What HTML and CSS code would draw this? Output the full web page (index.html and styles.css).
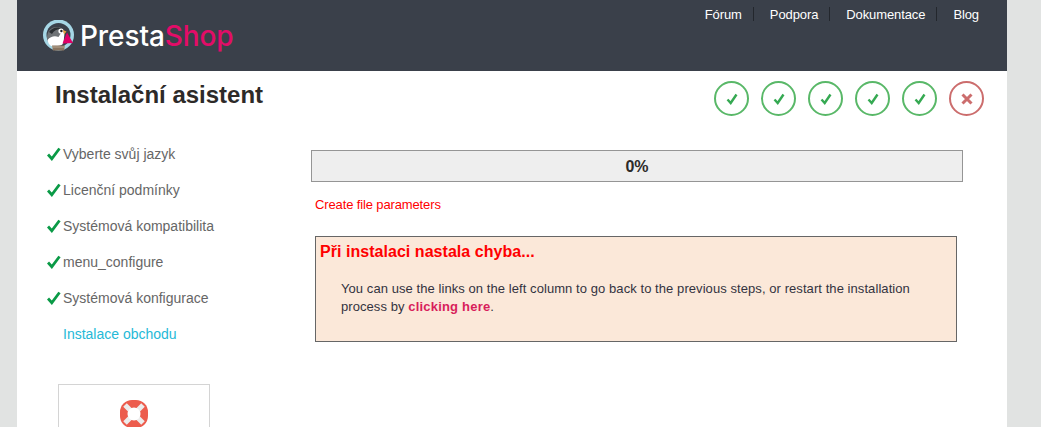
FILE: index.html
```html
<!DOCTYPE html>
<html lang="cs">
<head>
<meta charset="utf-8">
<title>PrestaShop</title>
<link rel="stylesheet" href="styles.css">
</head>
<body>
<div class="page">
  <header class="header">
    <div class="logo">
      <svg class="logo-mark" width="34" height="32" viewBox="0 0 34 32">
        <circle cx="16.500" cy="15" r="15.500" fill="#a6d7e6"/>
        <circle cx="16.500" cy="15" r="12" fill="#3a404a"/>
        <path d="M5 18c0-7 4-11 9.500-11 4 0 7 2 8 5.500L20 17l-3 4-11 1z" fill="#6f7376"/>
        <path d="M7 12c2-3 5-4.500 8-4.500 2 0 4 .5 5 1.500-4-.5-8 1-10 5z" fill="#2b2f33"/>
        <path d="M5.500 20c3-3.500 7-4.500 11-3 1.500-2 2.500-4 3-6l3 2-1 10c-1 2-3 3-6 3H9c-2-1.500-3-3.500-3.500-6z" fill="#fff"/>
        <circle cx="19" cy="11" r="2.600" fill="#fff"/>
        <circle cx="19.400" cy="11" r="1.200" fill="#1d2125"/>
        <path d="M21 10l3.500 1.500-2.500 3z" fill="#e8a33d"/>
        <path d="M25 12.500l6 10.500-10.500 .5z" fill="#df0067"/>
        <path d="M10 25.500h13l-1 5h-11z" fill="#8a7560"/>
        <path d="M10 26.500h13v1H10z" fill="#b9a993"/>
      </svg>
      <span class="logo-text">Presta<span class="logo-accent">Shop</span></span>
    </div>
    <nav class="topnav">
      <a class="topnav-link" href="#">Fórum</a>
      <a class="topnav-link" href="#">Podpora</a>
      <a class="topnav-link" href="#">Dokumentace</a>
      <a class="topnav-link" href="#">Blog</a>
    </nav>
  </header>

  <div class="titlebar">
    <h1 class="title">Instalační asistent</h1>
    <div class="steps">
      <span class="step step-ok"><svg width="14" height="14" viewBox="0 0 14 14"><path d="M2.500 7.500l3.200 3.500L11.500 2.500" class="tick"/></svg></span>
      <span class="step step-ok"><svg width="14" height="14" viewBox="0 0 14 14"><path d="M2.500 7.500l3.200 3.500L11.500 2.500" class="tick"/></svg></span>
      <span class="step step-ok"><svg width="14" height="14" viewBox="0 0 14 14"><path d="M2.500 7.500l3.200 3.500L11.500 2.500" class="tick"/></svg></span>
      <span class="step step-ok"><svg width="14" height="14" viewBox="0 0 14 14"><path d="M2.500 7.500l3.200 3.500L11.500 2.500" class="tick"/></svg></span>
      <span class="step step-ok"><svg width="14" height="14" viewBox="0 0 14 14"><path d="M2.500 7.500l3.200 3.500L11.500 2.500" class="tick"/></svg></span>
      <span class="step step-err"><svg width="14" height="14" viewBox="0 0 14 14"><path d="M2.500 2.500l9 9M11.500 2.500l-9 9" class="cross"/></svg></span>
    </div>
  </div>

  <div class="content">
    <aside class="sidebar">
      <ol class="menu">
        <li class="menu-item"><svg class="menu-tick" width="14" height="14" viewBox="0 0 14 14"><path d="M1 7.500l3.800 4.300L12.500 1.500" class="menu-tick-path"/></svg>Vyberte svůj jazyk</li>
        <li class="menu-item"><svg class="menu-tick" width="14" height="14" viewBox="0 0 14 14"><path d="M1 7.500l3.800 4.300L12.500 1.500" class="menu-tick-path"/></svg>Licenční podmínky</li>
        <li class="menu-item"><svg class="menu-tick" width="14" height="14" viewBox="0 0 14 14"><path d="M1 7.500l3.800 4.300L12.500 1.500" class="menu-tick-path"/></svg>Systémová kompatibilita</li>
        <li class="menu-item"><svg class="menu-tick" width="14" height="14" viewBox="0 0 14 14"><path d="M1 7.500l3.800 4.300L12.500 1.500" class="menu-tick-path"/></svg>menu_configure</li>
        <li class="menu-item"><svg class="menu-tick" width="14" height="14" viewBox="0 0 14 14"><path d="M1 7.500l3.800 4.300L12.500 1.500" class="menu-tick-path"/></svg>Systémová konfigurace</li>
        <li class="menu-item menu-current">Instalace obchodu</li>
      </ol>
      <div class="help">
        <svg width="30" height="30" viewBox="0 0 30 30">
          <rect x="1" y="1" width="28" height="28" rx="12" fill="#ec5c4d"/>
          <path d="M6 6l18 18M24 6L6 24" stroke="#ececec" stroke-width="5"/>
          <circle cx="15" cy="15" r="6.500" fill="#fff"/>
        </svg>
      </div>
    </aside>

    <main class="main">
      <div class="progress">0%</div>
      <p class="status">Create file parameters</p>
      <div class="error">
        <h3 class="error-title">Při instalaci nastala chyba...</h3>
        <p class="error-text">You can use the links on the left column to go back to the previous steps, or restart the installation process by <a class="error-link" href="#">clicking here</a>.</p>
      </div>
    </main>
  </div>
</div>
</body>
</html>
```
FILE: styles.css
```css
* { box-sizing: border-box; }
html, body { margin: 0; padding: 0; height: 427px; overflow: hidden; }
body {
  background: #e1e3e2;
  font-family: "Liberation Sans", Arial, sans-serif;
  font-size: 14px;
  color: #333;
}
.page {
  width: 990px;
  height: 427px;
  margin-left: 17px;
  background: #fff;
  overflow: hidden;
}
.header {
  height: 71px;
  background: #3a404a;
  display: flex;
  justify-content: space-between;
  padding: 0 17px 0 25px;
}
.logo { display: flex; align-items: center; gap: 4px; height: 71px; }
.logo-mark { display: block; }
.logo-text {
  font-family: Inter, sans-serif;
  font-size: 28px;
  font-weight: 500;
  letter-spacing: -0.1px;
  line-height: 36px;
  color: #fff;
}
.logo-accent { color: #e30c68; }
.topnav { display: flex; padding-top: 7px; }
.topnav-link {
  color: #fff;
  text-decoration: none;
  font-size: 13px;
  letter-spacing: -0.1px;
  line-height: 15px;
  height: 14px;
  padding: 0 11px 0 16px;
  border-right: 1px solid #23272d;
}
.topnav-link:last-child { border-right: 0; padding-right: 11px; }
.titlebar {
  display: flex;
  justify-content: space-between;
  height: 65px;
  padding: 10px 23px 0 38px;
}
.title {
  margin: 0;
  font-size: 24px;
  line-height: 28px;
  font-weight: bold;
  color: #2d2a28;
}
.steps { display: flex; gap: 12px; }
.step {
  width: 35px;
  height: 35px;
  border-radius: 50%;
  border: 2px solid #59b868;
  display: flex;
  align-items: center;
  justify-content: center;
}
.step-err { border-color: #cc6d6d; }
.tick { fill: none; stroke: #35a952; stroke-width: 2.400; }
.cross { fill: none; stroke: #cc6d6d; stroke-width: 3; }
.content { display: flex; }
.sidebar { width: 294px; flex: none; padding-left: 30px; }
.menu { list-style: none; margin: 0; padding: 0; }
.menu-item {
  display: flex;
  align-items: center;
  height: 36px;
  padding-left: 16px;
  position: relative;
  font-size: 14px;
  color: #666;
}
.menu-tick { position: absolute; left: 0; top: 11px; }
.menu-tick-path { fill: none; stroke: #0a9a46; stroke-width: 2.800; }
.menu-current { color: #25b9d7; }
.help {
  width: 152px;
  height: 80px;
  margin: 32px 0 0 11px;
  border: 1px solid #d4d4d4;
  display: flex;
  justify-content: center;
  padding-top: 14px;
}
.main { width: 652px; flex: none; padding-top: 14px; }
.progress {
  height: 32px;
  background: #eee;
  border: 1px solid #959595;
  text-align: center;
  font-size: 16px;
  line-height: 32px;
  font-weight: bold;
  color: #2d2a28;
}
.status {
  margin: 14px 0 0 4px;
  font-size: 13px;
  letter-spacing: -0.13px;
  line-height: 17px;
  color: #f00;
}
.error {
  width: 642px;
  height: 106px;
  margin: 23px 0 0 4px;
  border: 1px solid #666;
  background: #fbe8d9;
  padding: 4px;
}
.error-title {
  margin: 0;
  font-size: 16px;
  letter-spacing: 0.04px;
  line-height: 22px;
  font-weight: bold;
  color: #f00;
}
.error-text {
  margin: 17px 0 0 21px;
  width: 590px;
  font-size: 13px;
  letter-spacing: 0.07px;
  line-height: 18px;
  color: #33333f;
}
.error-link { color: #d81e5b; font-weight: bold; letter-spacing: 0.2px; text-decoration: none; }
```
